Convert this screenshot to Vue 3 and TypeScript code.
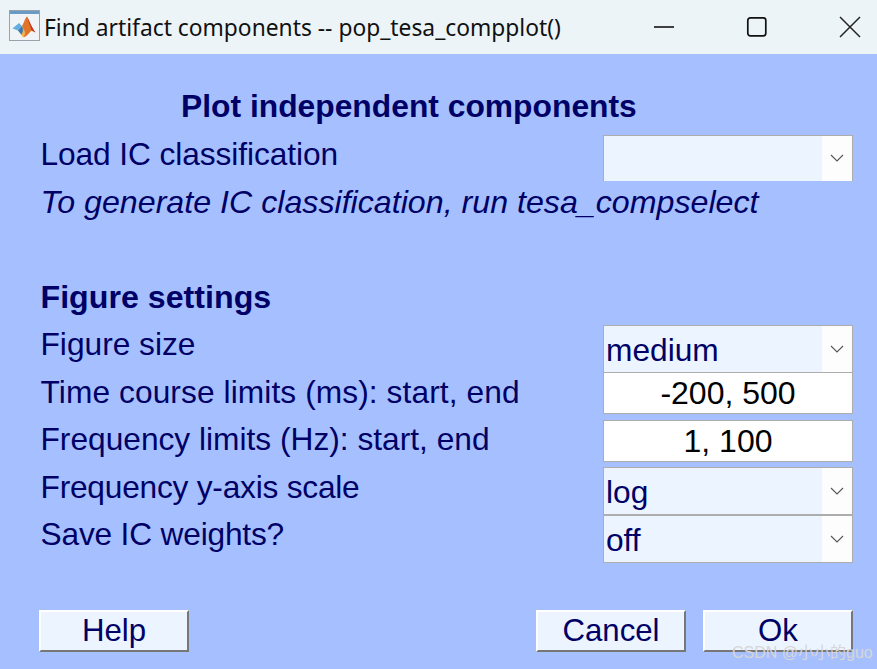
<template>
  <div class="window">
    <header class="titlebar">
      <svg class="app-icon" width="32" height="32" viewBox="0 0 32 32">
        <rect x="0.5" y="0.5" width="30" height="30" fill="#f1f4f6" stroke="#98a2aa" />
        <rect x="1" y="1" width="29" height="3" fill="#6b9ac4" />
        <path d="M3.5 18.5 L10 13 L13 16 L9 20.5 Z" fill="#62aee0" />
        <path d="M9 20.5 L13 16 L15.5 19 L12.5 25 Z" fill="#3a78ad" />
        <path d="M13 16 C15 13 16 8 18 6.5 C20 10 23 18 26.5 22.5 L22.5 20.5 C20 23 18 26 14.5 27.5 C16 24 16 20 13 16 Z" fill="#e2742a" />
        <path d="M18 6.5 C20 10 23 18 26.5 22.5 L22.5 20.5 C21 16 19.5 11 18 6.5 Z" fill="#c23a1c" />
        <path d="M13 16 C16 20 16 24 14.5 27.5 C13.5 27 13 26 12.5 25 C14 22 14.5 19 13 16 Z" fill="#f2b63c" />
      </svg>
      <span class="title">Find artifact components -- pop_tesa_compplot()</span>
      <div class="win-buttons">
        <svg width="22" height="22" viewBox="0 0 22 22"><path d="M1 11 H21" stroke="#111" stroke-width="1.6" /></svg>
        <svg width="22" height="22" viewBox="0 0 22 22"><rect x="1.8" y="1.8" width="18" height="18" rx="2.5" fill="none" stroke="#111" stroke-width="1.7" /></svg>
        <svg width="22" height="22" viewBox="0 0 22 22"><path d="M1 1 L21 21 M21 1 L1 21" stroke="#222" stroke-width="1.5" /></svg>
      </div>
    </header>

    <main class="body">
      <section class="form">
        <div class="heading">Plot independent components</div>

        <div class="label load">Load IC classification</div>
        <div class="select first">
          <span class="value"></span>
          <span class="arrow"><svg width="14" height="8" viewBox="0 0 14 8"><path d="M1 1 L7 7 L13 1" fill="none" stroke="#555" stroke-width="1.1" /></svg></span>
        </div>

        <div class="label hint">To generate IC classification, run tesa_compselect</div>
        <div class="blank"></div>

        <div class="label strong">Figure settings</div>

        <template v-for="row in rows" :key="row.label">
          <div class="label" :style="{ letterSpacing: row.tracking + 'px' }">{{ row.label }}</div>
          <div v-if="row.kind === 'select'" class="select">
            <span class="value">{{ row.value }}</span>
            <span class="arrow"><svg width="14" height="8" viewBox="0 0 14 8"><path d="M1 1 L7 7 L13 1" fill="none" stroke="#555" stroke-width="1.1" /></svg></span>
          </div>
          <div v-else class="input">{{ row.value }}</div>
        </template>
      </section>

      <footer class="actions">
        <button class="btn">Help</button>
        <div class="actions-right">
          <button class="btn">Cancel</button>
          <button class="btn">Ok</button>
        </div>
      </footer>

      <span class="watermark">CSDN @小小的guo</span>
    </main>
  </div>
</template>

<script setup lang="ts">
interface Row {
  label: string;
  kind: 'select' | 'input';
  value: string;
  tracking: number;
}

const rows: Row[] = [
  { label: 'Figure size', kind: 'select', value: 'medium', tracking: 0 },
  { label: 'Time course limits (ms): start, end', kind: 'input', value: '-200, 500', tracking: 0.09 },
  { label: 'Frequency limits (Hz): start, end', kind: 'input', value: '1, 100', tracking: 0 },
  { label: 'Frequency y-axis scale', kind: 'select', value: 'log', tracking: -0.23 },
  { label: 'Save IC weights?', kind: 'select', value: 'off', tracking: -0.19 },
];
</script>

<style>
html,
body {
  margin: 0;
  background: #a6c0ff;
}
</style>

<style scoped>
.window {
  width: 877px;
  height: 669px;
  display: flex;
  flex-direction: column;
  overflow: hidden;
  font-family: "Liberation Sans", Arial, sans-serif;
  color: #000066;
}

.titlebar {
  height: 54px;
  flex: none;
  display: flex;
  align-items: center;
  padding: 0 16px 0 9px;
  background: #ecf4f8;
  box-sizing: border-box;
}

.app-icon {
  flex: none;
  margin-top: -2px;
}

.title {
  margin-left: 3px;
  font-family: "Noto Sans", sans-serif;
  font-size: 22.8px;
  color: #111;
  white-space: nowrap;
}

.win-buttons {
  margin-left: auto;
  display: flex;
  gap: 71px;
  align-items: center;
}

.body {
  position: relative;
  flex: 1;
  background: #a6c0ff;
  padding: 33.4px 24px 0 40.5px;
}

.form {
  display: grid;
  grid-template-columns: minmax(0, 1fr) 250px;
  grid-auto-rows: 47.5px;
}

.heading {
  grid-column: 1 / -1;
  padding: 0.2px 0 0 140.5px;
  font-size: 31.8px;
  font-weight: 700;
  line-height: 36px;
}

.label {
  padding-top: 0.2px;
  font-size: 31.7px;
  line-height: 39px;
  white-space: nowrap;
}

.load {
  letter-spacing: -0.09px;
}

.hint {
  grid-column: 1 / -1;
  font-size: 32.2px;
  font-style: italic;
}

.blank {
  grid-column: 1 / -1;
}

.strong {
  grid-column: 1 / -1;
  font-size: 32.2px;
  font-weight: 700;
}

.select {
  height: 48px;
  box-sizing: border-box;
  display: flex;
  border: 1px solid #adadad;
  background: #ecf4ff;
}

.select.first {
  height: 46px;
  border-bottom: 0;
}

.value {
  flex: 1;
  padding-left: 2px;
  font-size: 31.7px;
  line-height: 48px;
}

.arrow {
  width: 30px;
  flex: none;
  display: flex;
  align-items: center;
  justify-content: center;
  background: #fdfdfd;
}

.input {
  height: 42px;
  box-sizing: border-box;
  border: 1px solid #adadad;
  background: #fff;
  color: #000;
  font-size: 32px;
  line-height: 41px;
  text-align: center;
}

.actions {
  position: absolute;
  left: 39px;
  right: 24px;
  top: 556px;
  display: flex;
  justify-content: space-between;
}

.actions-right {
  display: flex;
  gap: 17px;
}

.btn {
  width: 150px;
  height: 42px;
  padding: 0;
  box-sizing: border-box;
  border: 2px solid;
  border-color: #fff #777 #777 #fff;
  background: #ecf4ff;
  color: #000066;
  font-family: "Liberation Sans", Arial, sans-serif;
  font-size: 31.2px;
  line-height: 38px;
}

.watermark {
  position: absolute;
  left: 732px;
  top: 588px;
  font-family: "Liberation Sans", "Noto Sans CJK SC", sans-serif;
  font-size: 16px;
  line-height: 22px;
  color: #d6d6d6;
  white-space: nowrap;
}
</style>
